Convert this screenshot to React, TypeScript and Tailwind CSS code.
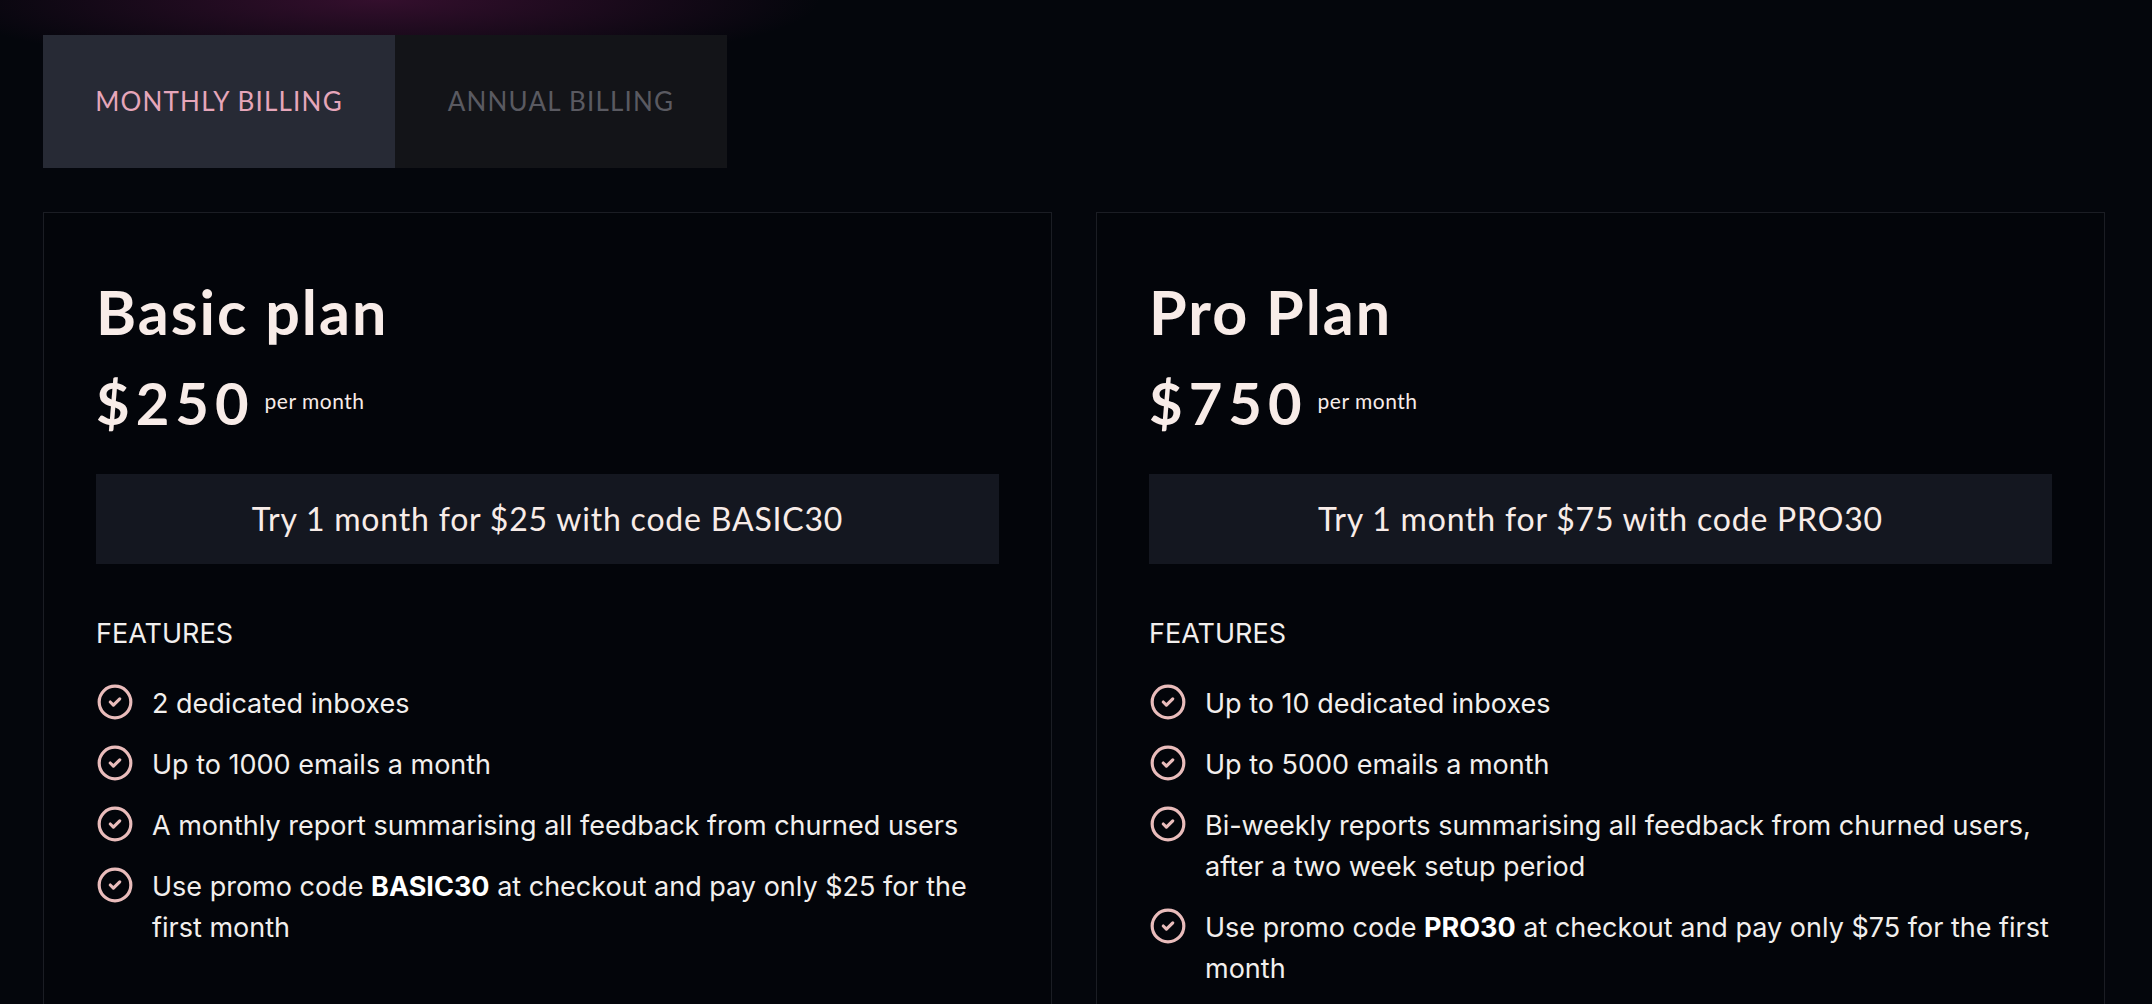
import { CircleCheck } from "lucide-react";

const plans = [
  {
    name: "Basic plan",
    price: "$250",
    promo: "Try 1 month for $25 with code BASIC30",
    features: [
      "2 dedicated inboxes",
      "Up to 1000 emails a month",
      "A monthly report summarising all feedback from churned users",
      <>
        Use promo code <strong className="font-bold text-white">BASIC30</strong> at checkout and pay only $25 for
        the first month
      </>,
    ],
  },
  {
    name: "Pro Plan",
    price: "$750",
    promo: "Try 1 month for $75 with code PRO30",
    features: [
      "Up to 10 dedicated inboxes",
      "Up to 5000 emails a month",
      "Bi-weekly reports summarising all feedback from churned users, after a two week setup period",
      <>
        Use promo code <strong className="font-bold text-white">PRO30</strong> at checkout and pay only $75 for the
        first month
      </>,
    ],
  },
];

function BillingTabs() {
  return (
    <div className="flex font-['Lato',sans-serif] text-[26px] font-normal">
      <button className="h-[133px] w-[352px] bg-[#272a35] uppercase tracking-[1.2px] text-[#e6a6ba]">
        Monthly billing
      </button>
      <button className="h-[133px] w-[332px] bg-[#131418] uppercase tracking-[1.2px] text-[#5a5a61]">
        Annual billing
      </button>
    </div>
  );
}

function PlanCard({ plan }: { plan: (typeof plans)[number] }) {
  return (
    <div className="border border-[#1b1d24] bg-[#03050a] px-[52px] pt-[64px] pb-[90px]">
      <h2 className="font-['Lato',sans-serif] text-[61px] font-bold leading-[70px] tracking-[2px] text-[#f8ece8]">
        {plan.name}
      </h2>
      <div className="mt-[24px] flex h-[64px] items-center font-['Lato',sans-serif] text-[#f8ece8]">
        <span className="text-[58px] font-bold leading-[64px] tracking-[6px]">{plan.price}</span>
        <span className="ml-[10px] mt-[-4px] text-[21px] tracking-[0.5px]">per month</span>
      </div>
      <div className="mt-[39px] flex h-[90px] items-center justify-center bg-[#141720] font-['Lato',sans-serif] text-[32px] tracking-[0.8px] text-[#f8ece8]">
        {plan.promo}
      </div>
      <div className="mt-[49px] font-['Inter',sans-serif] text-[27px] leading-[41px] text-[#f2efed]">
        <p>FEATURES</p>
        <ul className="mt-[29px] flex flex-col gap-[20px]">
          {plan.features.map((f, i) => (
            <li key={i} className="flex items-start gap-[18px]">
              <CircleCheck className="h-[38px] w-[38px] shrink-0 text-[#e9bcbb]" strokeWidth={2} />
              <span>{f}</span>
            </li>
          ))}
        </ul>
      </div>
    </div>
  );
}

export default function App() {
  return (
    <div className="min-h-screen bg-[#04060c] bg-[radial-gradient(ellipse_440px_70px_at_380px_0px,rgba(110,25,85,0.45),transparent)] pl-[43px] pr-[47px] pt-[35px]">
      <BillingTabs />
      <div className="mt-[44px] grid grid-cols-2 gap-[44px]">
        {plans.map((p) => (
          <PlanCard key={p.name} plan={p} />
        ))}
      </div>
    </div>
  );
}
